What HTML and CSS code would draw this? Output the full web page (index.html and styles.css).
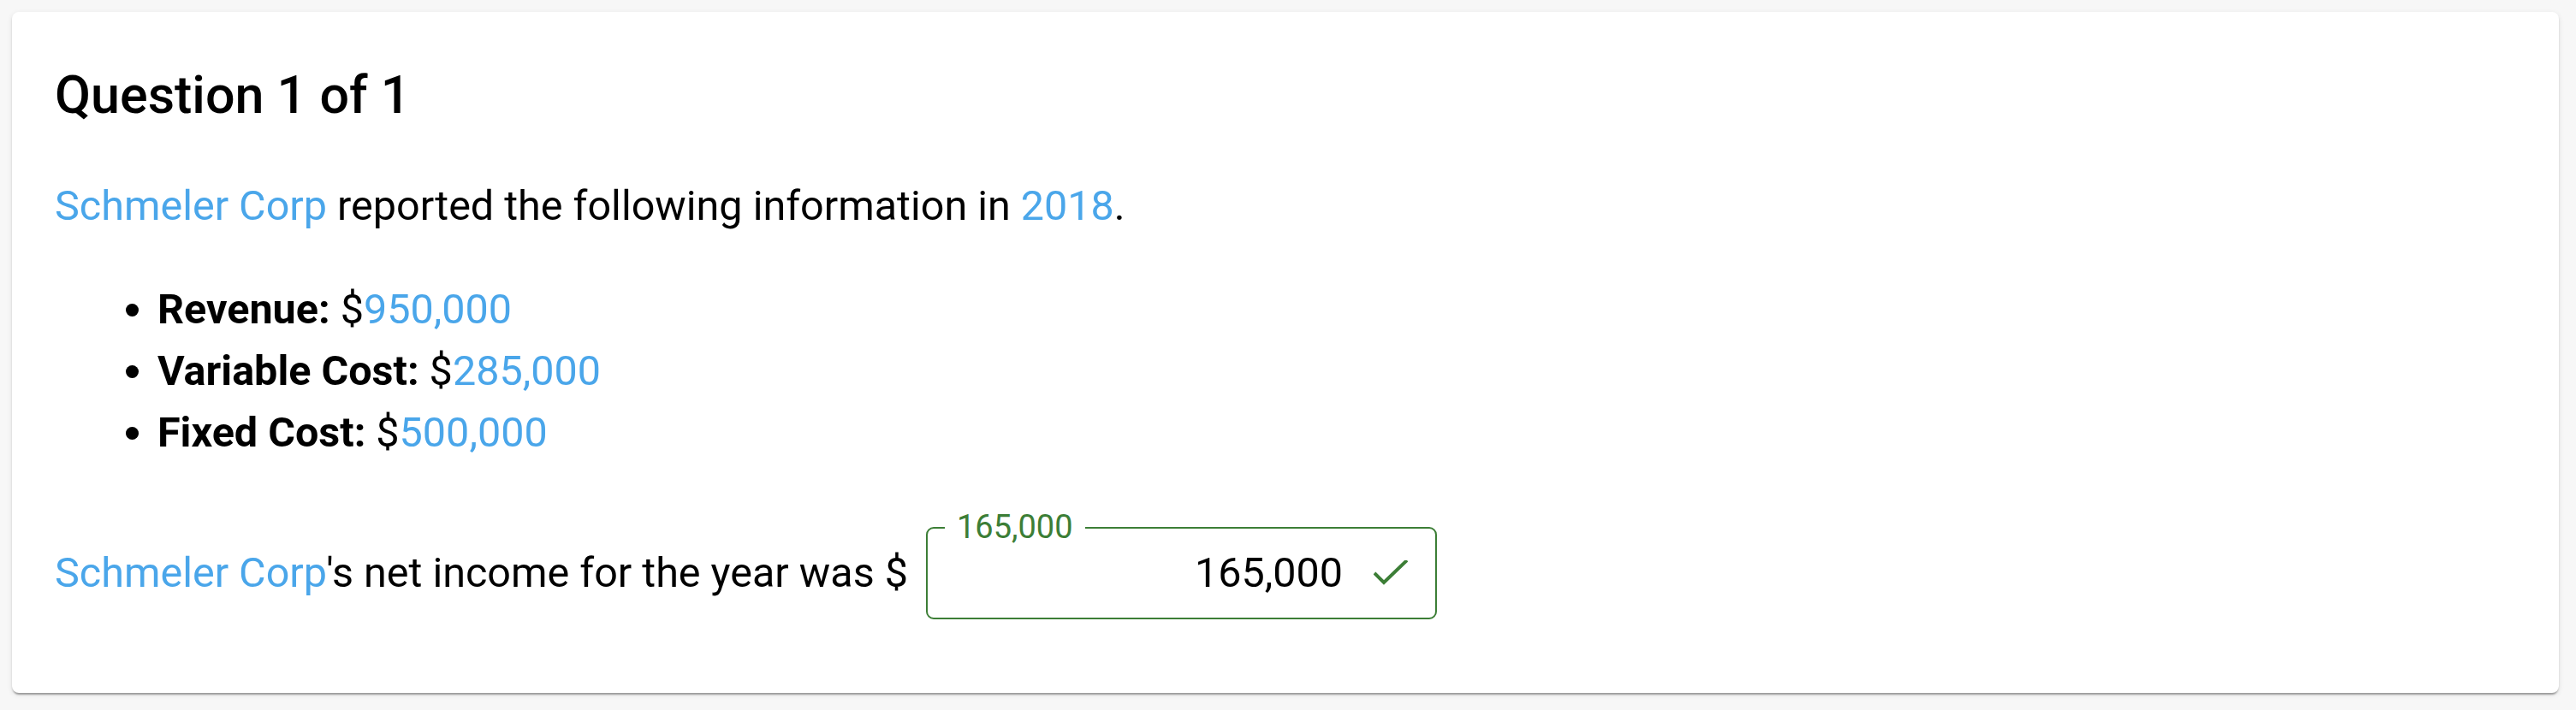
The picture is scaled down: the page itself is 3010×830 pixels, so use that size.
FILE: index.html
```html
<!DOCTYPE html>
<html lang="en">
<head>
<meta charset="utf-8">
<title>Question 1 of 1</title>
<link rel="stylesheet" href="styles.css">
</head>
<body>
<div class="card">
  <h2 class="title">Question 1 of 1</h2>
  <p class="para"><span class="var">Schmeler Corp</span> reported the following information in <span class="var">2018</span>.</p>
  <ul class="facts">
    <li><b>Revenue:</b> $<span class="var">950,000</span></li>
    <li><b>Variable Cost:</b> $<span class="var">285,000</span></li>
    <li><b>Fixed Cost:</b> $<span class="var">500,000</span></li>
  </ul>
  <div class="answer-row">
    <span class="prompt"><span class="var">Schmeler Corp</span>'s net income for the year was $</span>
    <div class="field">
      <span class="field-label">165,000</span>
      <span class="field-value">165,000</span>
      <svg class="check" viewBox="0 0 40 30" width="40" height="30" aria-hidden="true">
        <polyline points="1,15 12,26 39,0" fill="none" stroke="#3c7e36" stroke-width="4" stroke-linecap="butt" stroke-linejoin="miter"/>
      </svg>
    </div>
  </div>
</div>
</body>
</html>
```
FILE: styles.css
```css
html, body {
  margin: 0;
  padding: 0;
}
body {
  background: #f7f7f7;
  font-family: Roboto, "Liberation Sans", sans-serif;
  color: #000;
  padding: 14px 20px 21px 14px;
}
.card {
  background: #fff;
  border-radius: 8px;
  box-shadow: 0 4px 2px -2px rgba(0,0,0,0.22), 0 2px 2px 0 rgba(0,0,0,0.14), 0 2px 6px 0 rgba(0,0,0,0.10);
  padding: 59px 50px 86px 50px;
}
.title {
  margin: 0;
  font-size: 61px;
  font-weight: 500;
  line-height: 76.8px;
}
.para {
  margin: 55px 0 0 0;
  font-size: 48.5px;
  line-height: 72px;
}
.var {
  color: #4aa6ea;
}
.facts {
  margin: 49px 0 0 0;
  padding: 0 0 0 120px;
  font-size: 48.5px;
  line-height: 72px;
}
.facts b {
  font-weight: 700;
}
.answer-row {
  margin-top: 74px;
  display: flex;
  align-items: center;
  font-size: 48.5px;
  line-height: 72px;
}
.field {
  position: relative;
  margin-left: 21px;
  width: 597px;
  height: 108px;
  box-sizing: border-box;
  border: 2px solid #3c7e36;
  border-radius: 9px;
  display: flex;
  align-items: center;
  padding: 0 32px 0 20px;
}
.field-label {
  position: absolute;
  left: 20px;
  top: -21px;
  padding: 0 14px 0 14px;
  background: #fff;
  color: #3c7e36;
  font-size: 38px;
  line-height: 38px;
}
.field-value {
  flex: 1;
  text-align: right;
}
.check {
  margin-left: 36px;
  display: block;
}
```
